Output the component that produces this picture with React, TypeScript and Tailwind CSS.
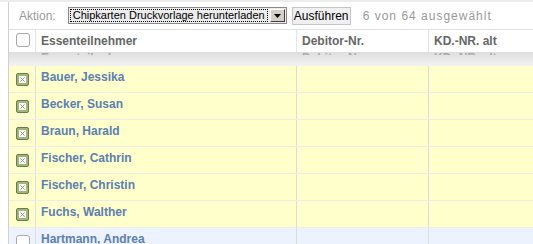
import React from "react";

const rows = [
  { name: "Bauer, Jessika", sel: true },
  { name: "Becker, Susan", sel: true },
  { name: "Braun, Harald", sel: true },
  { name: "Fischer, Cathrin", sel: true },
  { name: "Fischer, Christin", sel: true },
  { name: "Fuchs, Walther", sel: true },
  { name: "Hartmann, Andrea", sel: false },
];

function CheckedBox() {
  return (
    <div className="w-[13px] h-[13px] rounded-[2px] border border-[#6b7a55] bg-[#9fb777] flex items-center justify-center">
      <div className="w-[7px] h-[7px] bg-white flex items-center justify-center">
        <svg width="5" height="5" viewBox="0 0 5 5">
          <path d="M0.5 0.5 L4.5 4.5 M4.5 0.5 L0.5 4.5" stroke="#8a9a7a" strokeWidth="1" />
        </svg>
      </div>
    </div>
  );
}

function EmptyBox() {
  return <div className="w-[14px] h-[14px] rounded-[3px] border border-[#aaa] bg-white" />;
}

export default function App() {
  return (
    <div className="w-[533px] h-[244px] overflow-hidden bg-white font-['Liberation_Sans',Arial,sans-serif] text-[12px]">
      <div className="h-[2px] bg-[#ececec]" />
      <div className="ml-[8px] border-l border-[#d0d0d0]">
        {/* action bar */}
        <div className="h-[28px] flex items-center border-b border-[#e0e0e0]">
          <span className="ml-[10px] text-[#999] leading-[14px]">Aktion:</span>
          <div className="ml-[12px] h-[17px] w-[219px] border border-[#8a8a8a] bg-[#ececec] flex items-stretch p-[1px]">
            <div className="flex-1 border border-dotted border-black flex items-center pl-[2px] text-black leading-[13px] text-[11px] whitespace-nowrap overflow-hidden">
              Chipkarten Druckvorlage herunterladen
            </div>
            <div className="w-[15px] ml-[2px] bg-[#d4d0c8] border border-t-white border-l-white border-r-[#404040] border-b-[#404040] flex items-center justify-center">
              <svg width="7" height="4" viewBox="0 0 7 4">
                <path d="M0 0 H7 L3.5 4 Z" fill="#000" />
              </svg>
            </div>
          </div>
          <div className="ml-[5px] h-[18px] w-[59px] border border-[#c4c4c4] bg-[#f0f0f0] flex items-center justify-center text-black leading-[14px]">
            Ausführen
          </div>
          <span className="ml-[12px] text-[#999] tracking-[1px] leading-[14px]">6 von 64 ausgewählt</span>
        </div>
        {/* header */}
        <div className="h-[22px] flex bg-white">
          <div className="w-[27px] border-r border-[#e4e4e4] flex items-start pt-[3px] pl-[7px]">
            <EmptyBox />
          </div>
          <div className="w-[261px] border-r border-[#e4e4e4] pl-[5px] pt-[4px] font-bold text-[#666] leading-[14px]">Essenteilnehmer</div>
          <div className="w-[132px] border-r border-[#e4e4e4] pl-[5px] pt-[4px] font-bold text-[#666] leading-[14px]">Debitor-Nr.</div>
          <div className="flex-1 pl-[5px] pt-[4px] font-bold text-[#666] leading-[14px]">KD.-NR. alt</div>
        </div>
        {/* shadow band with ghost header tips */}
        <div className="h-[14px] bg-gradient-to-b from-[#dedede] to-[#f3f3f3] overflow-hidden">
          <div className="h-[3px] overflow-hidden flex">
            <div className="w-[27px]" />
            <div className="w-[261px] pl-[5px] font-bold text-[#aaa] leading-[14px] -mt-[1px]">Essenteilnehmer</div>
            <div className="w-[132px] pl-[5px] font-bold text-[#aaa] leading-[14px] -mt-[1px]">Debitor-Nr.</div>
            <div className="flex-1 pl-[5px] font-bold text-[#aaa] leading-[14px] -mt-[1px]">KD.-NR. alt</div>
          </div>
        </div>
        {/* rows */}
        {rows.map((r) => (
          <div
            key={r.name}
            className={`h-[27px] flex border-b ${r.sel ? "bg-[#ffffcc] border-[#ececec]" : "bg-[#edf3fe] border-[#e4eaf6]"}`}
          >
            <div className="w-[27px] border-r border-[#e0e0e0] pt-[7px] pl-[7px]">
              {r.sel ? <CheckedBox /> : <EmptyBox />}
            </div>
            <div className="w-[261px] border-r border-[#dcdcdc] pl-[5px] pt-[4px] font-bold text-[#5b80b2] leading-[14px]">
              {r.name}
            </div>
            <div className="w-[132px] border-r border-[#dcdcdc]" />
            <div className="flex-1" />
          </div>
        ))}
      </div>
    </div>
  );
}
